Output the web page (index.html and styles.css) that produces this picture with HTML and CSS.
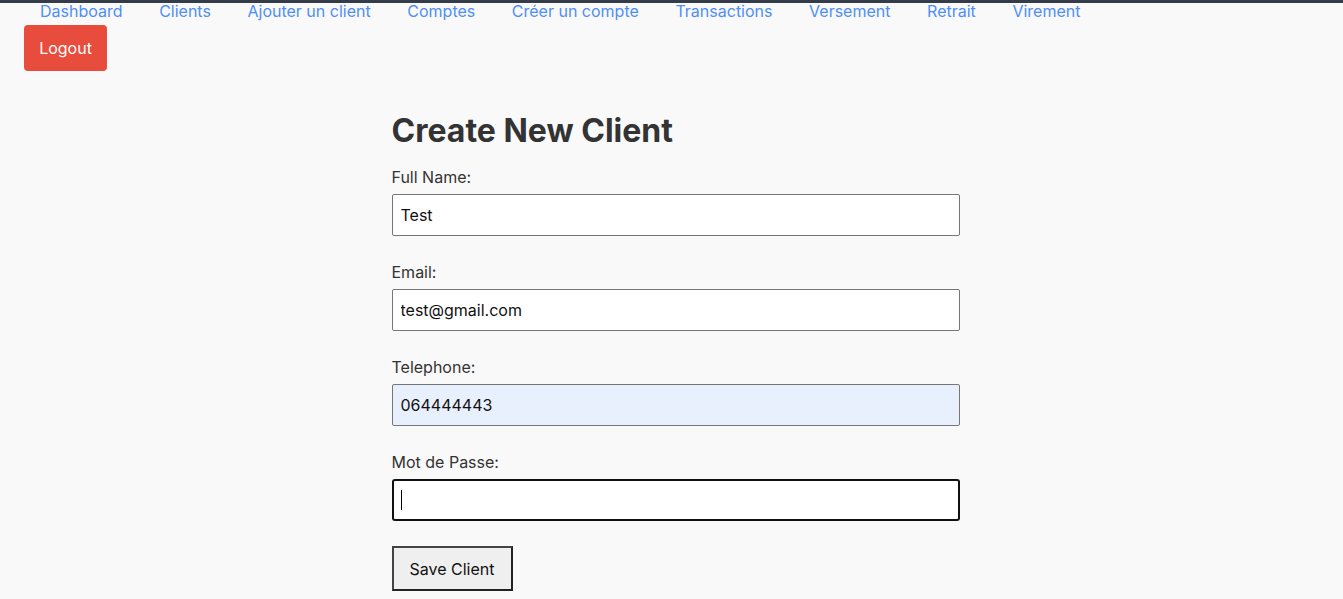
FILE: index.html
```html
<!DOCTYPE html>
<html lang="fr">
<head>
<meta charset="utf-8">
<title>Create New Client</title>
<link rel="stylesheet" href="styles.css">
</head>
<body>
<div class="topbar"></div>
<nav class="nav">
  <a href="#">Dashboard</a>
  <a href="#">Clients</a>
  <a href="#">Ajouter un client</a>
  <a href="#">Comptes</a>
  <a href="#">Créer un compte</a>
  <a href="#">Transactions</a>
  <a href="#">Versement</a>
  <a href="#">Retrait</a>
  <a href="#">Virement</a>
</nav>
<div class="logout-row">
  <button class="logout">Logout</button>
</div>
<main class="container">
  <h1 class="title">Create New Client</h1>
  <form class="form">
    <div class="group">
      <label>Full Name:</label>
      <input class="field" type="text" value="Test">
    </div>
    <div class="group">
      <label>Email:</label>
      <input class="field" type="text" value="test@gmail.com">
    </div>
    <div class="group">
      <label>Telephone:</label>
      <input class="field autofill" type="text" value="064444443">
    </div>
    <div class="group last">
      <label>Mot de Passe:</label>
      <div class="field focused"><span class="caret"></span></div>
    </div>
    <button type="button" class="save">Save Client</button>
  </form>
</main>
</body>
</html>
```
FILE: styles.css
```css
* { box-sizing: border-box; }
html, body { margin: 0; padding: 0; }
body {
  background: #f9f9f9;
  font-family: Inter, "Noto Sans", sans-serif;
  color: #333;
  height: 599px;
  overflow: hidden;
}
.topbar {
  height: 3px;
  background: #353c49;
}
.nav {
  display: flex;
  gap: 36.6px;
  padding-left: 40px;
  height: 16px;
  align-items: center;
  font-size: 16px;
  line-height: 16px;
}
.nav a {
  color: #4f8ef7;
  text-decoration: none;
}
.logout-row {
  padding: 6px 0 0 24px;
}
.logout {
  background: #e74c3c;
  color: #fff;
  border: none;
  border-radius: 4px;
  font-family: inherit;
  font-size: 16px;
  width: 83px;
  height: 46px;
  padding: 0;
}
.container {
  width: 568px;
  margin: 0 auto;
  padding-top: 40px;
  transform: translateX(4px);
}
.title {
  margin: 0 0 16px;
  font-size: 32px;
  font-weight: 700;
  line-height: 40px;
  color: #333;
}
.group {
  margin-bottom: 26px;
}
.group.last {
  margin-bottom: 25px;
}
.group label {
  display: block;
  font-size: 16px;
  line-height: 20px;
  color: #333;
  margin-bottom: 7px;
}
.field {
  display: block;
  width: 568px;
  height: 42px;
  border: 1px solid #767676;
  border-radius: 2px;
  background: #fff;
  font-family: inherit;
  font-size: 16px;
  color: #111;
  padding: 0 8px;
  margin: 0;
}
.field.autofill {
  background: #e8f0fe;
}
.field.focused {
  border: 2px solid #101010;
  border-radius: 3px;
  padding: 0 7px;
  display: flex;
  align-items: center;
}
.caret {
  display: block;
  width: 1px;
  height: 20px;
  background: #000;
}
.save {
  display: block;
  width: 121px;
  height: 45px;
  background: #efefef;
  border: 2px solid #222;
  border-top-color: #444;
  border-left-color: #444;
  font-family: inherit;
  font-size: 16px;
  color: #111;
  padding: 0;
}
```
